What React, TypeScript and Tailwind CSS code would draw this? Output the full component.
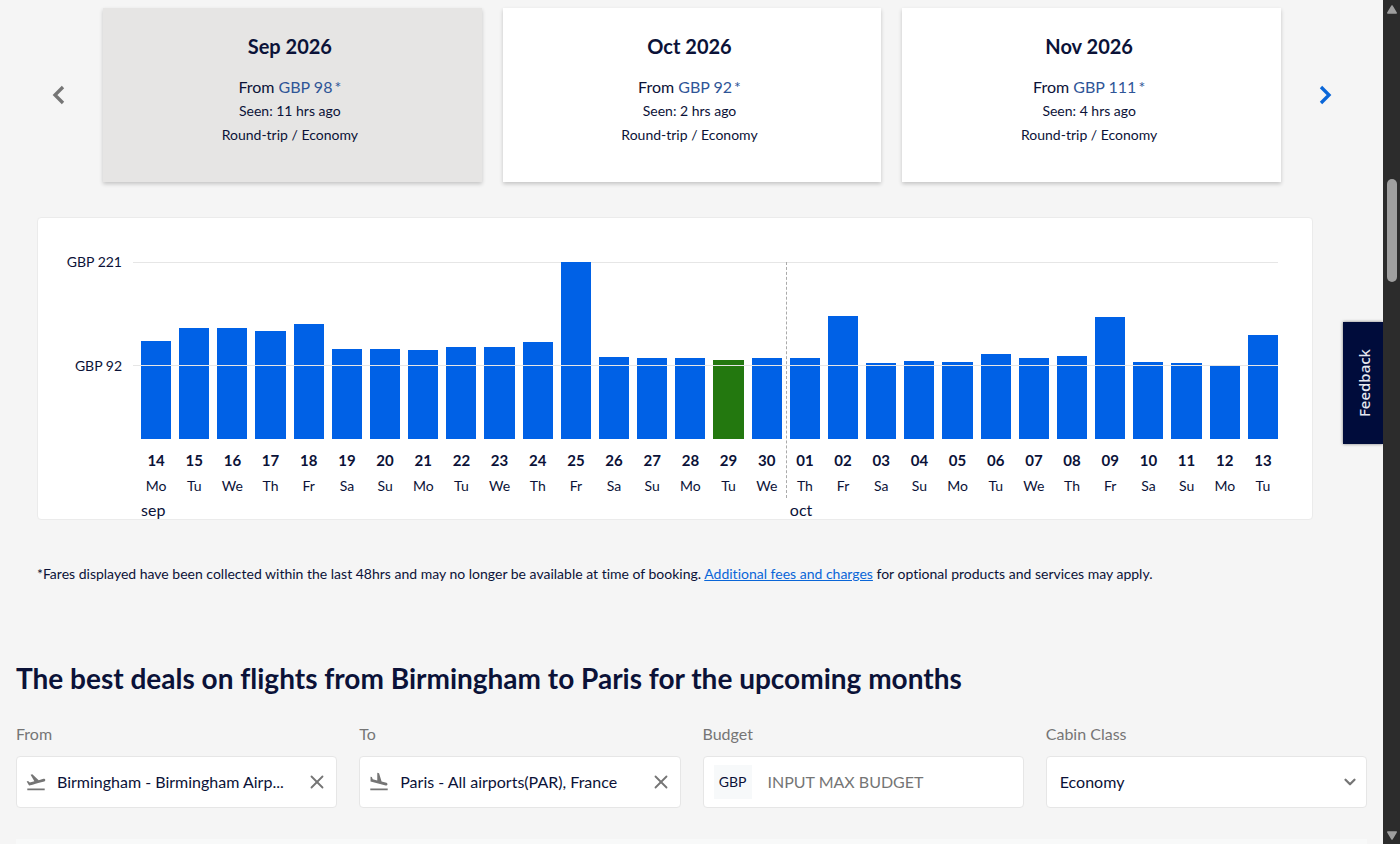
import React from "react";
import { ChevronDown, ChevronLeft, ChevronRight, X } from "lucide-react";
import { MdFlightLand, MdFlightTakeoff } from "react-icons/md";

const months = [
  { name: "Sep 2026", price: "GBP 98", seen: "11 hrs ago", active: true },
  { name: "Oct 2026", price: "GBP 92", seen: "2 hrs ago", active: false },
  { name: "Nov 2026", price: "GBP 111", seen: "4 hrs ago", active: false },
];

const MAX_PRICE = 221;

const days = [
  { date: "14", day: "Mo", price: 123, month: "sep" },
  { date: "15", day: "Tu", price: 139 },
  { date: "16", day: "We", price: 139 },
  { date: "17", day: "Th", price: 135 },
  { date: "18", day: "Fr", price: 144 },
  { date: "19", day: "Sa", price: 113 },
  { date: "20", day: "Su", price: 113 },
  { date: "21", day: "Mo", price: 111 },
  { date: "22", day: "Tu", price: 115 },
  { date: "23", day: "We", price: 115 },
  { date: "24", day: "Th", price: 121 },
  { date: "25", day: "Fr", price: 221 },
  { date: "26", day: "Sa", price: 102 },
  { date: "27", day: "Su", price: 101 },
  { date: "28", day: "Mo", price: 101 },
  { date: "29", day: "Tu", price: 99, lowest: true },
  { date: "30", day: "We", price: 101 },
  { date: "01", day: "Th", price: 101, month: "oct" },
  { date: "02", day: "Fr", price: 154 },
  { date: "03", day: "Sa", price: 95 },
  { date: "04", day: "Su", price: 97 },
  { date: "05", day: "Mo", price: 96 },
  { date: "06", day: "Tu", price: 106 },
  { date: "07", day: "We", price: 101 },
  { date: "08", day: "Th", price: 104 },
  { date: "09", day: "Fr", price: 152 },
  { date: "10", day: "Sa", price: 96 },
  { date: "11", day: "Su", price: 95 },
  { date: "12", day: "Mo", price: 92 },
  { date: "13", day: "Tu", price: 130 },
];

function MonthPicker() {
  return (
    <section className="flex items-center gap-6 pt-2 pr-[38px] pl-[39px]">
      <button aria-label="Previous months" className="flex h-10 w-10 shrink-0 items-center justify-center text-[#757575]">
        <ChevronLeft size={32} strokeWidth={2.5} strokeLinecap="butt" strokeLinejoin="miter" />
      </button>
      <div className="grid flex-1 grid-cols-3 gap-[21px]">
        {months.map((m) => (
          <button
            key={m.name}
            className={`flex h-[174px] flex-col items-center pt-6 pr-[5px] shadow-[0_2px_4px_rgba(0,0,0,0.2)] ${
              m.active ? "bg-[#e6e5e4]" : "bg-white"
            }`}
          >
            <span className="text-xl leading-7 font-bold">{m.name}</span>
            <span className="mt-[15px] text-base leading-6">
              From <span className="text-[#2f5597]">{m.price}</span>
              <span className="ml-0.5 text-[#2f5597]">*</span>
            </span>
            <span className="text-sm leading-6">Seen: {m.seen}</span>
            <span className="text-sm leading-6">Round-trip / Economy</span>
          </button>
        ))}
      </div>
      <button aria-label="Next months" className="flex h-10 w-10 shrink-0 items-center justify-center text-[#0a66d8]">
        <ChevronRight size={32} strokeWidth={2.5} strokeLinecap="butt" strokeLinejoin="miter" />
      </button>
    </section>
  );
}

function FareChart() {
  return (
    <section className="mt-[35px] mr-[70px] ml-[37px] flex h-[303px] rounded-sm border border-[#ebebeb] bg-white pt-11 pr-[34px]">
      <div className="relative h-[177px] w-[95px] shrink-0 pr-[11px] text-right text-sm leading-5">
        <p className="-mt-2.5">GBP 221</p>
        <p className="mt-[84px]">GBP 92</p>
      </div>
      <div className="relative flex-1 pl-2">
        <div className="absolute inset-x-0 top-0 border-t border-[#e6e6e6]" />
        <div className="pointer-events-none absolute inset-x-0 top-[103px] z-10 border-t border-[#e6e6e6]" />
        <div className="grid grid-cols-[repeat(30,minmax(0,1fr))] gap-2">
          {days.map((d) => (
            <button key={d.date} className="relative flex flex-col items-center">
              {d.date === "01" && (
                <span className="absolute top-0 -left-1 h-[236px] border-l border-dashed border-[#aaaaaa]" />
              )}
              <span className="flex h-[177px] w-full items-end">
                <span
                  className={`w-full ${d.lowest ? "bg-[#23780f]" : "bg-[#0061e6]"}`}
                  style={{ height: `${(d.price / MAX_PRICE) * 100}%` }}
                />
              </span>
              <span className="mt-[7px] text-[15px] leading-7 font-bold">{d.date}</span>
              <span className="text-sm leading-6">{d.day}</span>
              {d.month && <span className="self-start text-base leading-6">{d.month}</span>}
            </button>
          ))}
        </div>
      </div>
    </section>
  );
}

const box = "flex h-[52px] items-center rounded border border-[#e6e6e6] bg-white";

function AirportField({
  id,
  label,
  value,
  icon,
}: {
  id: string;
  label: string;
  value: string;
  icon: React.ReactNode;
}) {
  return (
    <div>
      <label htmlFor={id} className="mb-2.5 block text-base leading-6 text-[#757575]">
        {label}
      </label>
      <div className={`${box} px-2`}>
        <span className="text-[#757575]">{icon}</span>
        <input id={id} defaultValue={value} className="ml-2.5 min-w-0 flex-1 text-base outline-none" />
        <button type="button" aria-label={`Clear ${label}`} className="text-[#757575]">
          <X size={22} strokeWidth={2} />
        </button>
      </div>
    </div>
  );
}

function Deals() {
  return (
    <section className="mt-[76px] px-4">
      <h2 className="text-[28px] leading-9 font-bold">
        The best deals on flights from Birmingham to Paris for the upcoming months
      </h2>
      <form className="mt-[26px] grid grid-cols-4 gap-[22px]">
        <AirportField id="from" label="From" value="Birmingham - Birmingham Airp..." icon={<MdFlightTakeoff size={22} />} />
        <AirportField id="to" label="To" value="Paris - All airports(PAR), France" icon={<MdFlightLand size={22} />} />
        <div>
          <label htmlFor="budget" className="mb-2.5 block text-base leading-6 text-[#757575]">
            Budget
          </label>
          <div className={`${box} px-2.5`}>
            <span className="flex h-[34px] w-[38px] items-center justify-center bg-[#f7f9fa] text-sm">GBP</span>
            <input
              id="budget"
              placeholder="INPUT MAX BUDGET"
              className="ml-4 min-w-0 flex-1 text-base outline-none placeholder:text-[#757575]"
            />
          </div>
        </div>
        <div>
          <label htmlFor="cabin" className="mb-2.5 block text-base leading-6 text-[#757575]">
            Cabin Class
          </label>
          <div className="relative">
            <select id="cabin" className={`${box} w-full appearance-none px-[13px] text-base outline-none`}>
              <option>Economy</option>
              <option>Business</option>
            </select>
            <ChevronDown size={18} strokeWidth={3} className="pointer-events-none absolute top-[17px] right-2 text-[#757575]" />
          </div>
        </div>
      </form>
      <div className="mt-[31px] h-10 bg-[#f8f9f9]" />
    </section>
  );
}

function ScrollBar() {
  return (
    <div className="flex w-[17px] shrink-0 flex-col items-center justify-between bg-[#2c2c2c] pt-1 pb-[3px]">
      <svg width="12" height="10" viewBox="0 0 12 10" fill="#9f9f9f" stroke="#9f9f9f" strokeWidth="1.5" strokeLinejoin="round">
        <path d="M6 2 L10.200 9 H1.800 Z" />
      </svg>
      <div className="mt-[165px] mb-auto h-[103px] w-2.5 rounded-full bg-[#9f9f9f]" />
      <svg width="12" height="10" viewBox="0 0 12 10" fill="#9f9f9f" stroke="#9f9f9f" strokeWidth="1.5" strokeLinejoin="round">
        <path d="M6 8 L10.200 1 H1.800 Z" />
      </svg>
    </div>
  );
}

function App() {
  return (
    <div className="flex h-screen bg-[#f5f5f5] font-['Lato',sans-serif] text-[#0b1238] [font-variant-ligatures:none]">
      <main className="relative min-w-0 flex-1 overflow-hidden">
        <MonthPicker />
        <FareChart />
        <p className="mt-11 pr-[70px] pl-[37px] text-sm leading-5">
          *Fares displayed have been collected within the last 48hrs and may no longer be available at time of booking.{" "}
          <a href="#fees" className="text-[#0a66d8] underline">
            Additional fees and charges
          </a>{" "}
          for optional products and services may apply.
        </p>
        <Deals />
        <button className="absolute top-[322px] right-0 flex h-[122px] w-10 items-center justify-center bg-[#000c3b] pl-0.5 font-['Noto_Sans',sans-serif] text-[15px] font-medium text-[#e6e8f0] shadow-[0_0_3px_rgba(0,0,0,0.5)]">
          <span className="rotate-180 [writing-mode:vertical-rl]">Feedback</span>
        </button>
      </main>
      <ScrollBar />
    </div>
  );
}

export default App;
